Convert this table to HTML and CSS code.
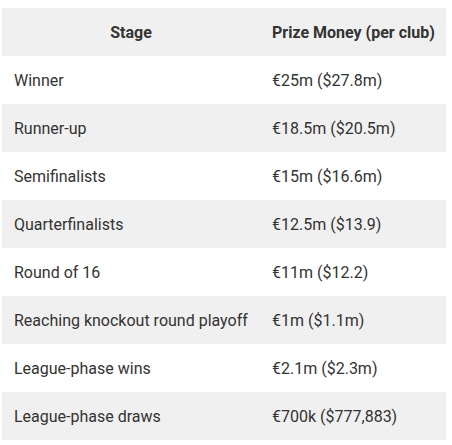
FILE: index.html
```html
<!DOCTYPE html>
<html>
<head>
<meta charset="utf-8">
<link rel="stylesheet" href="styles.css">
</head>
<body>
<table class="prize">
  <colgroup><col class="c1"><col class="c2"></colgroup>
  <thead>
    <tr><th>Stage</th><th>Prize Money (per club)</th></tr>
  </thead>
  <tbody>
    <tr><td>Winner</td><td>€25m ($27.8m)</td></tr>
    <tr><td>Runner-up</td><td>€18.5m ($20.5m)</td></tr>
    <tr><td>Semifinalists</td><td>€15m ($16.6m)</td></tr>
    <tr><td>Quarterfinalists</td><td>€12.5m ($13.9)</td></tr>
    <tr><td>Round of 16</td><td>€11m ($12.2)</td></tr>
    <tr><td>Reaching knockout round playoff</td><td>€1m ($1.1m)</td></tr>
    <tr><td>League-phase wins</td><td>€2.1m ($2.3m)</td></tr>
    <tr><td>League-phase draws</td><td>€700k ($777,883)</td></tr>
  </tbody>
</table>
</body>
</html>
```
FILE: styles.css
```css
body {
  margin: 8px 6px 8px 2px;
  background: #fff;
  font-family: Roboto, "Liberation Sans", sans-serif;
  color: #333;
}
.prize {
  width: 444px;
  border-collapse: collapse;
  table-layout: fixed;
  font-size: 16px;
}
.c1 { width: 258px; }
.c2 { width: 186px; }
.prize th, .prize td {
  height: 48px;
  padding: 0 12px;
  box-sizing: border-box;
  vertical-align: middle;
  white-space: nowrap;
}
.prize th {
  font-weight: 700;
  text-align: center;
  background: #f0f0f0;
}
.prize td {
  text-align: left;
}
.prize tbody tr:nth-child(even) td {
  background: #f0f0f0;
}
```
